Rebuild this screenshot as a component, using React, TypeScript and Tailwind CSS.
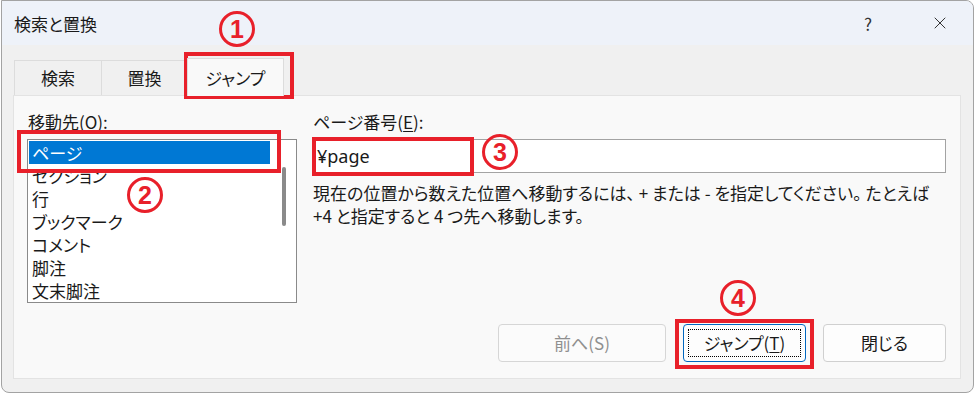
import React from 'react';
import { X } from 'lucide-react';

const items = ['ページ', 'セクション', '行', 'ブックマーク', 'コメント', '脚注', '文末脚注'];

const RedBox: React.FC<{ className: string }> = ({ className }) => (
  <div className={`absolute border-4 border-[#e8202a] ${className}`} />
);

const Badge: React.FC<{ n: string; className: string }> = ({ n, className }) => (
  <div
    className={`absolute w-[36px] h-[36px] rounded-full border-[3px] border-[#e8202a] text-[#e8202a] flex items-center justify-center text-[25px] font-bold leading-none font-['Liberation_Sans',sans-serif] ${className}`}
  >
    {n}
  </div>
);

const App: React.FC = () => {
  return (
    <div className="relative w-[975px] h-[395px] bg-white overflow-hidden font-['Noto_Sans_CJK_JP','Noto_Sans',sans-serif] [font-feature-settings:'palt'] text-[#1a1a1a]">
      <div className="ml-[1px] w-[973px] h-[393px] border border-[#a3a3a3] rounded-tr-[8px] rounded-b-[8px] bg-[#f0f0f0] flex flex-col overflow-hidden">
        {/* title bar */}
        <div className="h-[44px] bg-[#eef2f9] flex items-center pl-[12px] text-[17px] leading-none">
          <span>検索と置換</span>
          <span className="ml-auto mr-[58px] text-[#333] text-[17px]">?</span>
          <X className="mr-[23px] w-[20px] h-[20px] text-[#222]" strokeWidth={1.1} />
        </div>

        {/* tabs */}
        <div className="h-[50px] pl-[12px] flex items-end text-[17px]">
          <div className="w-[87px] h-[35px] border-t border-l border-[#dcdcdc] flex items-center justify-center">検索</div>
          <div className="w-[86px] h-[35px] border-t border-l border-[#dcdcdc] flex items-center justify-center">置換</div>
          <div className="w-[97px] h-[38px] border-t border-l border-r border-[#dcdcdc] bg-[#f9f9f9] flex items-center justify-center -mb-px relative z-10">
            ジャンプ
          </div>
        </div>

        {/* panel */}
        <div className="ml-[11px] w-[948px] h-[284px] bg-[#f9f9f9] border border-[#e3e3e3] flex flex-col text-[17px]">
          <div className="flex gap-[16px] pt-[16px] pl-[13px] pr-[14px]">
            <div className="w-[270px] flex flex-col">
              <div className="ml-[1px] h-[20px] leading-[20px]">移動先(O):</div>
              <div className="mt-[7px] h-[164px] bg-white border border-[#8a8a8a] relative p-[1px]">
                <div className="w-[241px] flex flex-col">
                  {items.map((it, i) => (
                    <div
                      key={it}
                      className={`h-[23px] leading-[23px] pl-[3px] ${i === 0 ? 'bg-[#0078d4] text-white' : ''}`}
                    >
                      {it}
                    </div>
                  ))}
                </div>
                <div className="absolute left-[254px] top-[27px] w-[4px] h-[59px] rounded-full bg-[#8a8a8a]" />
              </div>
            </div>

            <div className="flex-1 flex flex-col">
              <div className="h-[20px] leading-[20px]">
                ページ番号(<span className="underline underline-offset-2">E</span>):
              </div>
              <div className="mt-[7px] h-[34px] bg-white border border-[#a3a3a3] flex items-center pl-[3px] text-[18px] font-['Noto_Sans','Noto_Sans_CJK_JP',sans-serif]">
                ¥page
              </div>
              <div className="mt-[8px] leading-[23px]">
                現在の位置から数えた位置へ移動するには、 + または - を指定してください。 たとえば
                <br />
                +4 と指定すると 4 つ先へ移動します。
              </div>
            </div>
          </div>

          <div className="mt-auto flex justify-end gap-[17px] pr-[14px] pb-[16px]">
            <button className="w-[168px] h-[38px] rounded-[4px] border border-[#d6d6d6] bg-[#fbfbfb] text-[#8f8f8f]">
              前へ(S)
            </button>
            <button className="w-[123px] h-[38px] rounded-[4px] border border-[#0067c0] bg-[#fdfdfd] p-[4px]">
              <div className="w-full h-full border border-dotted border-black flex items-center justify-center">
                ジャンプ(<span className="underline underline-offset-2">T</span>)
              </div>
            </button>
            <button className="w-[123px] h-[38px] rounded-[4px] border border-[#d0d0d0] bg-[#fdfdfd]">
              閉じる
            </button>
          </div>
        </div>
      </div>

      {/* annotations */}
      <RedBox className="left-[184px] top-[52px] w-[110px] h-[47px]" />
      <RedBox className="left-[17px] top-[130px] w-[264px] h-[43px]" />
      <RedBox className="left-[312px] top-[137px] w-[162px] h-[39px]" />
      <RedBox className="left-[675px] top-[319px] w-[139px] h-[50px]" />
      <Badge n="1" className="left-[219px] top-[11px]" />
      <Badge n="2" className="left-[127px] top-[177px]" />
      <Badge n="3" className="left-[482px] top-[134px]" />
      <Badge n="4" className="left-[720px] top-[280px]" />
    </div>
  );
};

export default App;
